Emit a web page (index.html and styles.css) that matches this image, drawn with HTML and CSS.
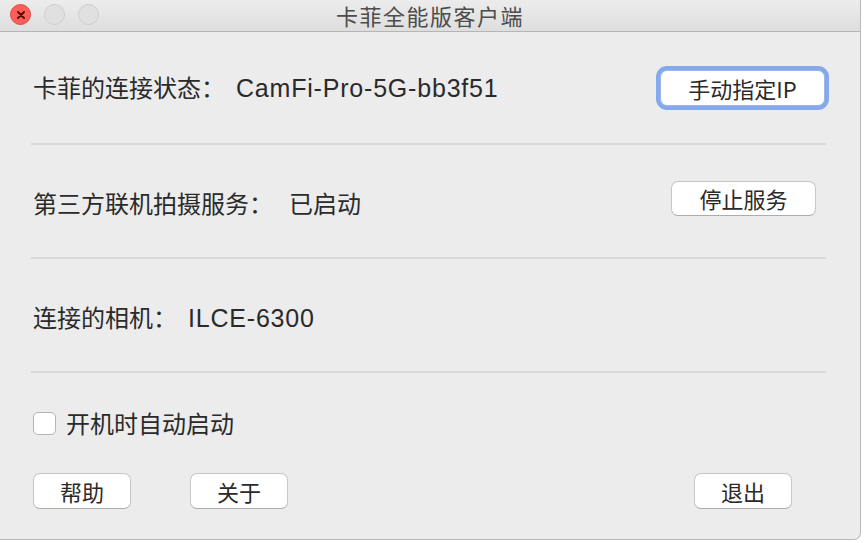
FILE: index.html
```html
<!DOCTYPE html>
<html lang="zh-CN">
<head>
<meta charset="UTF-8">
<title>卡菲全能版客户端</title>
<link rel="stylesheet" href="styles.css">
</head>
<body>
<div class="window">
  <div class="titlebar">
    <div class="lights">
      <span class="light close">
        <svg width="10" height="10" viewBox="0 0 10 10"><path d="M2 2L8 8M8 2L2 8" stroke="#5a0b06" stroke-width="2" stroke-linecap="round"/></svg>
      </span>
      <span class="light"></span>
      <span class="light"></span>
    </div>
    <div class="title">卡菲全能版客户端</div>
  </div>

  <div class="content">
    <div class="row row-first">
      <span class="label">卡菲的连接状态：<span class="value latin">CamFi-Pro-5G-bb3f51</span></span>
      <button class="btn btn-focus">手动指定IP</button>
    </div>
    <div class="divider"></div>

    <div class="row">
      <span class="label">第三方联机拍摄服务：<span class="value value-cjk">已启动</span></span>
      <button class="btn btn-stop">停止服务</button>
    </div>
    <div class="divider"></div>

    <div class="row">
      <span class="label">连接的相机：<span class="value latin">ILCE-6300</span></span>
    </div>
    <div class="divider"></div>

    <label class="check-row">
      <span class="checkbox"></span>
      <span class="label">开机时自动启动</span>
    </label>

    <div class="actions">
      <button class="btn btn-small">帮助</button>
      <button class="btn btn-small">关于</button>
      <span class="spacer"></span>
      <button class="btn btn-small">退出</button>
    </div>
  </div>
</div>
</body>
</html>
```

FILE: styles.css
```css
body {
  margin: 0;
  background: #ffffff;
  font-family: "Liberation Sans", "Noto Sans CJK SC", sans-serif;
  color: #2a2a2a;
}
.window {
  width: 861px;
  height: 540px;
  background: #ececec;
  border-right: 1px solid #b8b8b8;
  border-bottom: 1px solid #b8b8b8;
  border-bottom-right-radius: 7px;
  box-sizing: border-box;
  overflow: hidden;
}
.titlebar {
  height: 32px;
  position: relative;
  background: linear-gradient(#ececec, #dedede);
  border-bottom: 1px solid #b5b5b5;
  box-sizing: border-box;
}
.lights {
  position: absolute;
  left: 10px;
  top: 4px;
  display: flex;
  gap: 13px;
}
.light {
  width: 21px;
  height: 21px;
  border-radius: 50%;
  border: 1px solid #cdcdcd;
  background: #e0e0e0;
  box-sizing: border-box;
  display: flex;
  align-items: center;
  justify-content: center;
}
.light.close {
  background: #fc5f57;
  border-color: #e1473f;
}
.title {
  text-align: center;
  font-family: "Noto Sans CJK SC", sans-serif;
  font-size: 22px;
  line-height: 31px;
  color: #4c4c4c;
  letter-spacing: 1.5px;
}
.content {
  padding: 0 0 0 33px;
}
.row {
  height: 112px;
  display: flex;
  align-items: center;
  justify-content: space-between;
  padding-right: 44px;
}
.row-first {
  height: 111px;
  padding-right: 35px;
}
.label {
  font-family: "Noto Sans CJK SC", sans-serif;
  font-size: 24px;
  line-height: 30px;
}
.row .label {
  padding-top: 4px;
}
.row-first .label {
  padding-top: 0;
}
.value {
  margin-left: 11px;
}
.value-cjk {
  margin-left: 16px;
}
.latin {
  font-family: "Liberation Sans", sans-serif;
  font-size: 25px;
  letter-spacing: 0.8px;
}
.divider {
  height: 2px;
  width: 795px;
  margin-left: -2px;
  background: #d9d9d9;
}
.btn {
  font-family: "Noto Sans CJK SC", sans-serif;
  font-size: 22px;
  color: #2a2a2a;
  background: #ffffff;
  border: 1px solid #c6c6c6;
  border-bottom-color: #acacac;
  border-radius: 7px;
  padding: 0;
  height: 36px;
  box-sizing: border-box;
}
.btn-focus {
  width: 165px;
  border-color: #9bb6ea;
  box-shadow: 0 0 0 4px #86a8ec;
}
.btn-stop {
  width: 145px;
  height: 35px;
  margin-top: -6px;
}
.btn-small {
  width: 98px;
}
.check-row {
  height: 100px;
  display: flex;
  align-items: center;
  gap: 10px;
}
.checkbox {
  width: 23px;
  height: 23px;
  background: #ffffff;
  border: 1px solid #b4b4b4;
  border-radius: 5px;
  box-sizing: border-box;
}
.actions {
  display: flex;
  align-items: center;
  gap: 59px;
  padding-right: 68px;
}
.spacer {
  flex: 1;
}
```
